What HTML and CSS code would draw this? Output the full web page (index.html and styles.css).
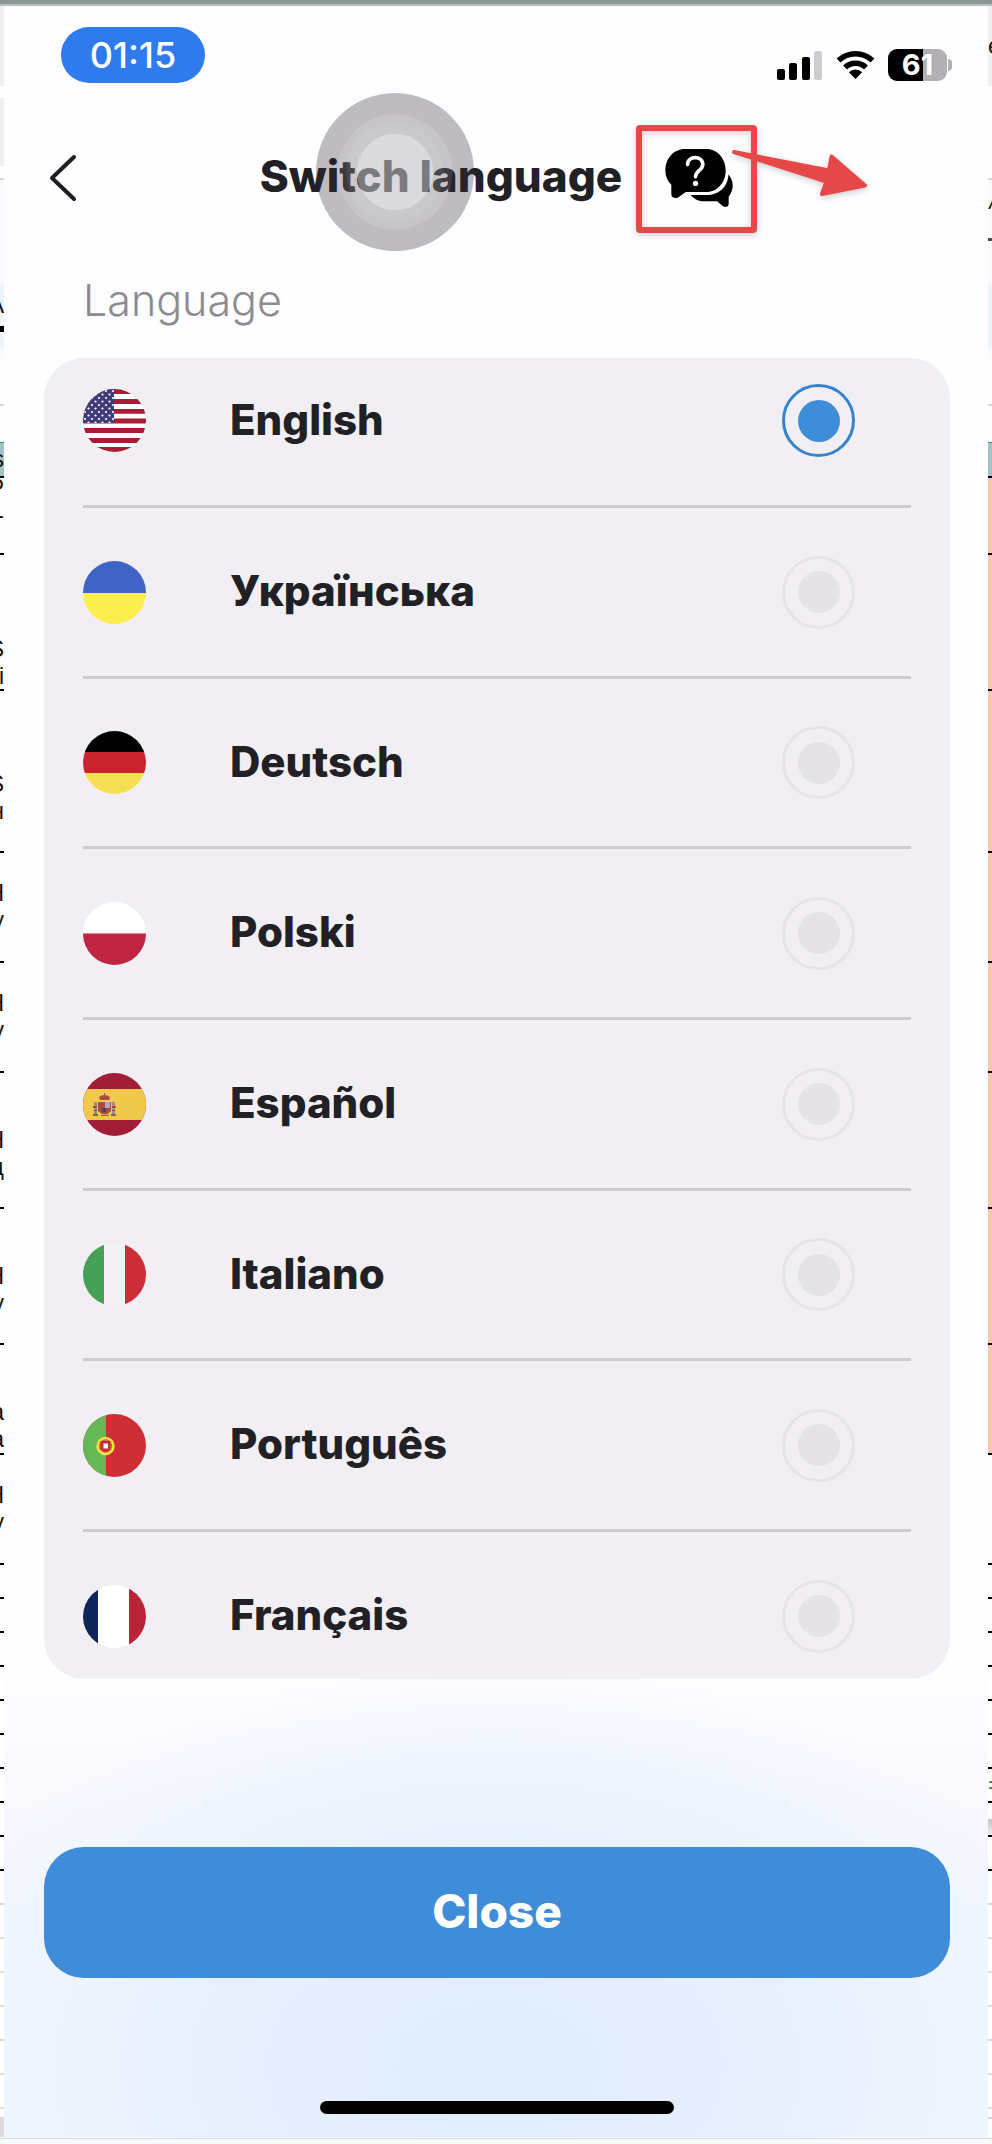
FILE: index.html
```html
<!DOCTYPE html>
<html lang="en">
<head>
<meta charset="utf-8">
<meta name="viewport" content="width=device-width, initial-scale=1">
<title>Switch language</title>
<link rel="stylesheet" href="styles.css">
</head>
<body>
<div class="topline"></div>
<div class="stage">
  <div class="sheet" aria-hidden="true">
    <div class="cell tool"></div>
    <div class="cell white h12"></div>
    <div class="cell tool h68"></div>
    <div class="cell white h14 rule"></div>
    <div class="cell pale h104"></div>
    <div class="cell tab h48"><span>A</span></div>
    <div class="cell tab h16"></div>
    <div class="cell pale h13"></div>
    <div class="cell white h45 rule"></div>
    <div class="cell white h36"></div>
    <div class="cell teal"><span>s</span></div>
    <div class="cell row h77"><span>Р</span><span>-</span><span>&nbsp;</span></div>
    <div class="cell row h136"><span>&nbsp;</span><span>&nbsp;</span><span>&nbsp;</span><span>S</span><span>ді</span></div>
    <div class="cell row h162"><span>&nbsp;</span><span>&nbsp;</span><span>S</span><span>н</span></div>
    <div class="cell row h110"><span>Н</span><span>у</span></div>
    <div class="cell row h110"><span>Н</span><span>у</span></div>
    <div class="cell row h136"><span>&nbsp;</span><span>Н</span><span>ц</span></div>
    <div class="cell row h136"><span>&nbsp;</span><span>Н</span><span>у</span></div>
    <div class="cell row h110"><span>&nbsp;</span><span>&nbsp;</span><span>а</span><span>а</span></div>
    <div class="cell row h110"><span>Н</span><span>у</span></div>
    <div class="cell row"></div><div class="cell row"></div><div class="cell row"></div>
    <div class="cell row"></div><div class="cell row"></div><div class="cell row"></div>
    <div class="cell row"></div><div class="cell row"></div><div class="cell row"></div>
    <div class="cell row light"></div><div class="cell row light"></div><div class="cell row light"></div>
    <div class="cell row light"></div><div class="cell row light"></div><div class="cell row light"></div>
    <div class="cell row light"></div>
    <div class="cell white h10 rule"></div>
    <div class="cell thumb"></div>
  </div>

  <main class="phone">
    <div class="status">
      <span class="clock">01:15</span>
      <div class="indicators">
        <svg class="signal" viewBox="0 0 46 29" role="img" aria-label="Signal">
          <rect x="0" y="18" width="8" height="11" rx="2"/><rect x="12" y="12" width="8" height="17" rx="2"/>
          <rect x="25" y="6" width="8" height="23" rx="2"/><rect x="37" y="0" width="8" height="29" rx="2" fill="#cfccd1"/>
        </svg>
        <svg class="wifi" viewBox="0 0 39 30" role="img" aria-label="Wi-Fi">
          <path d="M2.500 10.500a24.500 24.500 0 0 1 34 0M9 17.500a15 15 0 0 1 21 0" fill="none" stroke="#000" stroke-width="5.500"/>
          <path d="M12.800 22.300a9.600 9.600 0 0 1 13.400 0L19.500 29z"/>
        </svg>
        <span class="battery"><span class="cellbody">61</span><span class="nub"></span></span>
      </div>
    </div>

    <header class="header">
      <button class="back" type="button" aria-label="Back">
        <svg viewBox="0 0 28 48"><path d="M25 3L3 24l22 21" fill="none" stroke="#1f1d22" stroke-width="4" stroke-linecap="round" stroke-linejoin="round"/></svg>
      </button>
      <div class="heading">
        <h1>Switch language</h1>
        <span class="touch"></span>
        <button class="chat" type="button" aria-label="Help chat">
          <svg class="chat-icon" viewBox="0 0 206 175">
            <path d="M58 0h66c34 0 58 30 58 65s-24 65-58 65H62l-24 16q-16 6-20-8v-30C6 96 0 82 0 65 0 28 26 0 58 0z"/>
            <path d="M190 76c17 20 18 46 1 68v21q-1 12-15 9l-20-16h-41c-16 0-30-8-39-19h48c38 0 66-26 66-63z"/>
            <path d="M67 47c0-28 46-28 46 0 0 18-22 17-22 37" fill="none" stroke="#fff" stroke-width="11" stroke-linecap="round"/>
            <circle cx="91" cy="104" r="8" fill="#fff"/>
          </svg>
          <svg class="callout" viewBox="0 0 236 112" aria-hidden="true">
            <rect x="3" y="3" width="115" height="102" rx="1" fill="none" stroke="#e6484a" stroke-width="6"/>
            <path d="M98 27L193 45.500l2.500-14L229 60.500 186 69l4.500-12.500z" fill="#e6484a" stroke="#e6484a" stroke-width="4" stroke-linejoin="round"/>
          </svg>
        </button>
      </div>
    </header>

    <h2 class="caption" id="caption">Language</h2>

    <div class="card" role="radiogroup" aria-labelledby="caption">
      <label class="option">
        <svg class="flag" viewBox="0 0 63 63">
          <defs><pattern id="stars" width="7" height="7" patternUnits="userSpaceOnUse"><circle cx="2" cy="2" r="1.100" fill="#fff"/><circle cx="5.500" cy="5.500" r="1.100" fill="#fff"/></pattern></defs>
          <path fill="#fff" d="M0 0h63v63H0z"/>
          <path fill="#a81c35" d="M0 0h63v5H0zM0 10h63v5H0zM0 20h63v4.800H0zM0 29.500h63v5H0zM0 39h63v5H0zM0 49h63v5H0zM0 58h63v5H0z"/>
          <path fill="#403c79" d="M0 0h31v34H0z"/><path fill="url(#stars)" d="M0 0h31v34H0z"/>
        </svg>
        <span class="name">English</span><input type="radio" name="lang" checked>
      </label>
      <label class="option">
        <svg class="flag" viewBox="0 0 63 63"><path fill="#4063c8" d="M0 0h63v32H0z"/><path fill="#fdee4f" d="M0 32h63v31H0z"/></svg>
        <span class="name">Українська</span><input type="radio" name="lang">
      </label>
      <label class="option">
        <svg class="flag" viewBox="0 0 63 63"><path d="M0 0h63v21H0z"/><path fill="#c9242e" d="M0 21h63v21H0z"/><path fill="#f5e053" d="M0 42h63v21H0z"/></svg>
        <span class="name">Deutsch</span><input type="radio" name="lang">
      </label>
      <label class="option">
        <svg class="flag" viewBox="0 0 63 63"><path fill="#fff" d="M0 0h63v32H0z"/><path fill="#bf2440" d="M0 31.500h63V63H0z"/></svg>
        <span class="name">Polski</span><input type="radio" name="lang">
      </label>
      <label class="option">
        <svg class="flag" viewBox="0 0 63 63">
          <path fill="#a01f37" d="M0 0h63v63H0z"/><path fill="#f0c94a" d="M0 16h63v31H0z"/>
          <path fill="#a8494a" d="M16 24q5.500-4 11 0l-1 3h-9zM15 29h13v9q-6 7-13 0z"/><path fill="#b9a3bd" d="M22 29h5v6h-5z"/><path fill="#4c4665" d="M19 35h4v4h-4z"/>
          <path fill="#98907f" d="M11 29h3v13h-3zM29 29h3v13h-3z"/><path fill="#a8494a" d="M10 33h4v2h-4zM29 33h4v2h-4zM11 37h3v1h-3zM29 37h3v1h-3z"/><path fill="#806070" d="M10 41h5v2h-5zM28 41h5v2h-5zM18 42h8v1h-8zM21 20h1v3h-1z"/>
        </svg>
        <span class="name">Español</span><input type="radio" name="lang">
      </label>
      <label class="option">
        <svg class="flag" viewBox="0 0 63 63"><path fill="#f4f1f5" d="M0 0h63v63H0z"/><path fill="#47a057" d="M0 0h21v63H0z"/><path fill="#cc2d38" d="M42 0h21v63H42z"/></svg>
        <span class="name">Italiano</span><input type="radio" name="lang">
      </label>
      <label class="option">
        <svg class="flag" viewBox="0 0 63 63"><path fill="#cf2e37" d="M0 0h63v63H0z"/><path fill="#66b755" d="M0 0h23v63H0z"/><circle cx="22.500" cy="32" r="8" fill="#cf6a30" stroke="#f2e33d" stroke-width="2.500"/><path fill="#c82b32" d="M17.500 27h10v8q-5 6-10 0z"/><path fill="#fff" d="M20.500 29.500h4.500v5h-4.500z"/></svg>
        <span class="name">Português</span><input type="radio" name="lang">
      </label>
      <label class="option">
        <svg class="flag" viewBox="0 0 63 63"><path fill="#fff" d="M0 0h63v63H0z"/><path fill="#102558" d="M0 0h15v63H0z"/><path fill="#b92536" d="M46 0h17v63H46z"/></svg>
        <span class="name">Français</span><input type="radio" name="lang">
      </label>
    </div>

    <button class="close" type="button">Close</button>
    <div class="home"></div>
  </main>

  <div class="sheet right" aria-hidden="true">
    <div class="cell tool"><span>e</span></div>
    <div class="cell white h94 rule"></div>
    <div class="cell pale h61 dark"><span>^</span></div>
    <div class="cell pale h43"></div>
    <div class="cell tab h64"></div>
    <div class="cell pale h13"></div>
    <div class="cell white h45 rule"></div>
    <div class="cell white h36"></div>
    <div class="cell teal"></div>
    <div class="cell row peach h77"></div>
    <div class="cell row peach h136"></div>
    <div class="cell row peach h162"></div>
    <div class="cell row peach h110"></div>
    <div class="cell row peach h110"></div>
    <div class="cell row peach h136"></div>
    <div class="cell row peach h136"></div>
    <div class="cell row peach h110"></div>
    <div class="cell row h110"></div>
    <div class="cell row"></div><div class="cell row"></div><div class="cell row"></div>
    <div class="cell row"></div><div class="cell row"></div><div class="cell row"></div>
    <div class="cell row formula"><span>=</span></div><div class="cell row fade"></div><div class="cell row"></div>
    <div class="cell row light"></div><div class="cell row light"></div><div class="cell row light"></div>
    <div class="cell row light"></div><div class="cell row light"></div><div class="cell row light"></div>
    <div class="cell row light"></div>
    <div class="cell white h10 rule"></div>
    <div class="cell white h18"></div>
  </div>
</div>
<div class="bottomline"></div>
</body>
</html>
```
FILE: styles.css
```css
* { box-sizing: border-box; }

body {
  margin: 0;
  min-height: 100vh;
  display: flex;
  flex-direction: column;
  background: #f8f9fb;
  font-family: Inter, "Noto Sans", sans-serif;
  color: #212025;
}

button {
  border: 0;
  padding: 0;
  background: none;
  font: inherit;
  color: inherit;
}

svg { display: block; }

.topline {
  height: 6px;
  background: #8a9793;
  border-bottom: 2px solid #b4bec8;
}

.bottomline {
  height: 2px;
  border-bottom: 1px solid #dadadd;
}

.stage {
  display: grid;
  grid-template-columns: 4px minmax(0, 1fr) 4px;
}

/* Spreadsheet slivers on both sides */
.sheet {
  overflow: hidden;
  background: #fff;
  font-family: "Liberation Sans", sans-serif;
  font-size: 23px;
  line-height: 27px;
  color: #111;
}

.cell {
  display: flex;
  flex-direction: column;
  justify-content: center;
  align-items: flex-end;
  overflow: hidden;
}

.right .cell { align-items: flex-start; }

.cell.tool { background: #f2f0ef; height: 80px; }
.cell.pale { background: #f9fbfe; }
.cell.tab { background: #eff3fa; }
.cell.teal { background: #a3c1c7; height: 36px; border-top: 1px solid #3d9a48; border-bottom: 2px solid #000; }
.cell.rule { border-bottom: 2px solid #d8d8da; }
.cell.dark { border-bottom: 3px solid #444b4b; }
.cell.row { height: 34px; border-bottom: 2px solid #000; }
.cell.light { border-color: #dededf; }
.cell.peach { background: #f8c9ae; }
.cell.thumb { height: 18px; background: #d8d9dc; }
.cell.formula { color: #2d8237; }
.cell.fade { background: linear-gradient(#fff 50%, #c4c4c4 50%, #eee); }

.cell.h10 { height: 10px; }
.cell.h12 { height: 12px; }
.cell.h13 { height: 13px; }
.cell.h14 { height: 14px; }
.cell.h16 { height: 16px; }
.cell.h18 { height: 18px; }
.cell.h36 { height: 36px; }
.cell.h43 { height: 43px; }
.cell.h45 { height: 45px; }
.cell.h48 { height: 48px; border-bottom: 6px solid #000; }
.cell.h61 { height: 61px; }
.cell.h64 { height: 64px; }
.cell.h68 { height: 68px; }
.cell.h77 { height: 77px; }
.cell.h94 { height: 94px; }
.cell.h104 { height: 104px; }
.cell.h110 { height: 110px; }
.cell.h136 { height: 136px; }
.cell.h162 { height: 162px; }

/* Phone screen */
.phone {
  display: flex;
  flex-direction: column;
  padding: 21px 38px 20px 40px;
  background:
    radial-gradient(ellipse 620px 400px at 50% 2060px, #e1edfc 0%, #e5effd 40%, #eff5fe 75%, rgba(243, 247, 255, 0) 100%),
    linear-gradient(#fefdff 1660px, #f8f8fe 1800px, #f0f5fe 1960px, #f1f6fe 100%);
}

.status {
  display: flex;
  justify-content: space-between;
  align-items: flex-end;
  padding-left: 17px;
}

.clock {
  width: 144px;
  height: 56px;
  border-radius: 28px;
  background: #2f7bed;
  color: #fff;
  font-size: 36px;
  font-weight: 500;
  line-height: 56px;
  text-align: center;
}

.indicators {
  display: flex;
  align-items: center;
  gap: 13px;
  margin-right: -2px;
  padding-bottom: 2px;
}

.signal { width: 46px; height: 29px; }
.wifi { width: 39px; height: 30px; }

.battery {
  display: flex;
  align-items: center;
  gap: 1px;
}

.cellbody {
  width: 59px;
  height: 32px;
  border-radius: 9px;
  background: linear-gradient(90deg, #000 60%, #b3b0b5 60%);
  color: #fff;
  font-size: 29px;
  font-weight: 700;
  line-height: 32px;
  text-align: center;
}

.nub {
  width: 4px;
  height: 12px;
  border-radius: 0 4px 4px 0;
  background: #b3b0b5;
}

.header {
  display: grid;
  grid-template-columns: 1fr auto 1fr;
  align-items: center;
  height: 108px;
  margin-top: 41px;
}

.back { justify-self: start; padding-left: 5px; }
.back svg { width: 28px; height: 48px; }

.heading {
  position: relative;
  display: flex;
  align-items: center;
  gap: 43px;
}

h1 {
  margin: 0;
  padding-bottom: 4px;
  font-size: 44px;
  font-weight: 800;
  line-height: 52px;
}

.touch {
  position: absolute;
  left: 56px;
  top: -56px;
  width: 158px;
  height: 158px;
  border-radius: 50%;
  background: radial-gradient(circle,
    rgba(191, 190, 195, .57) 38px,
    rgba(130, 128, 134, .42) 38px 48px,
    rgba(105, 100, 108, .37) 49px 57px,
    rgba(49, 42, 54, .31) 58px);
}

.chat { position: relative; }
.chat-icon { width: 69px; height: 58px; }

.callout {
  position: absolute;
  left: -29px;
  top: -24px;
  width: 236px;
  height: 112px;
  filter: drop-shadow(0 2px 3px rgba(0, 0, 0, .2));
}

.caption {
  margin: 44px 39px 34px;
  font-size: 43px;
  font-weight: 300;
  line-height: 48px;
  color: #8d8b90;
}

.card {
  padding: 0 39px;
  border-radius: 40px;
  background: #f1eff4;
}

.option {
  display: flex;
  align-items: center;
  height: 171px;
  padding-right: 56px;
  border-bottom: 3px solid #cfccd1;
}

.option:nth-child(3n) { height: 170px; }
.option:first-child { height: 150px; padding-bottom: 22px; }
.option:last-child { height: 147px; padding-top: 21px; border-bottom: 0; }

.flag {
  width: 63px;
  height: 63px;
  border-radius: 50%;
}

.name {
  flex: 1;
  padding-left: 84px;
  padding-bottom: 2px;
  font-size: 42px;
  font-weight: 800;
  line-height: 52px;
}

.option input {
  appearance: none;
  display: grid;
  place-items: center;
  width: 73px;
  height: 73px;
  margin: 0;
  border: 3px solid #e7e4e8;
  border-radius: 50%;
}

.option input::before {
  content: "";
  width: 42px;
  height: 42px;
  border-radius: 50%;
  background: #e5e3e6;
}

.option input:checked { border-color: #3584ca; }
.option input:checked::before { background: #3f8cd8; }

.close {
  height: 131px;
  margin-top: 168px;
  padding-bottom: 4px;
  border-radius: 40px;
  background: #3f8dd9;
  color: #fff;
  font-size: 46px;
  font-weight: 800;
}

.home {
  width: 39%;
  height: 13px;
  margin: 123px auto 0;
  border-radius: 7px;
  background: #000;
}
```
